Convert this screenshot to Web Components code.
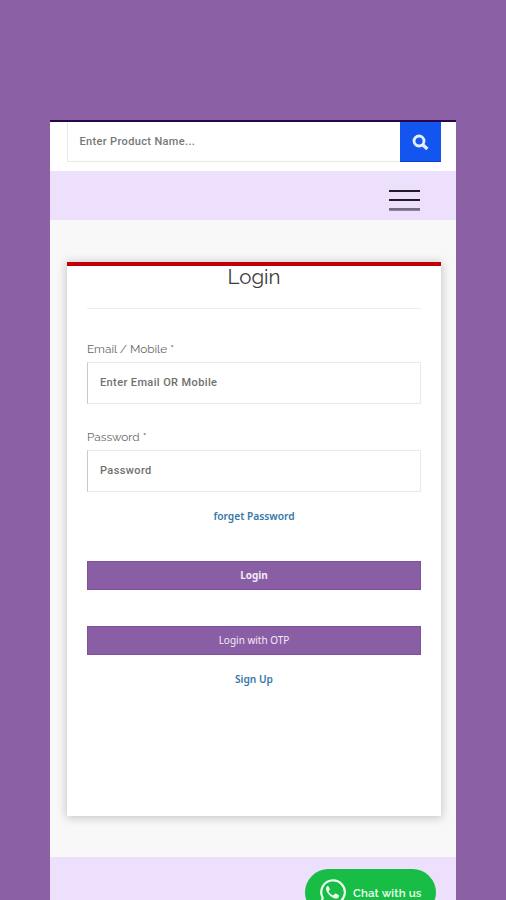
<!DOCTYPE html>
<html lang="en">
<head>
<meta charset="UTF-8">
<title>Login</title>
<style>
  body {
    margin: 0;
    background: #8b60a4;
    font-family: Roboto, "Liberation Sans", sans-serif;
  }
</style>
</head>
<body>
<phone-screen>
  <search-bar placeholder="Enter Product Name..."></search-bar>
  <menu-bar></menu-bar>
  <login-card heading="Login">
    <form-field label="Email / Mobile *" hint="Enter Email OR Mobile"></form-field>
    <form-field label="Password *" hint="Password"></form-field>
    <text-link class="forget">forget Password</text-link>
    <action-button class="strong">Login</action-button>
    <action-button class="otp">Login with OTP</action-button>
    <text-link class="signup">Sign Up</text-link>
  </login-card>
  <chat-footer>Chat with us</chat-footer>
</phone-screen>

<script>
class PhoneScreen extends HTMLElement {
  constructor() {
    super();
    this.attachShadow({ mode: "open" });
    this.shadowRoot.innerHTML = `
      <style>
        :host {
          display: block;
          box-sizing: border-box;
          height: 900px;
          padding: 120px 50px 0;
          overflow: hidden;
        }
        .screen {
          box-sizing: border-box;
          display: flex;
          flex-direction: column;
          height: 780px;
          border-top: 2px solid #25074a;
          background: #f8f8f8;
          overflow: hidden;
        }
      </style>
      <div class="screen"><slot></slot></div>
    `;
  }
}
customElements.define("phone-screen", PhoneScreen);

class SearchBar extends HTMLElement {
  constructor() {
    super();
    this.attachShadow({ mode: "open" });
    this.shadowRoot.innerHTML = `
      <style>
        :host {
          display: flex;
          flex: none;
          box-sizing: border-box;
          height: 49px;
          padding: 0 15px 9px 17px;
          background: #fff;
        }
        .box {
          flex: 1;
          box-sizing: border-box;
          padding-left: 11.5px;
          border: solid #e8e8e8;
          border-width: 0 0 1px 1px;
          font-size: 11px;
          font-weight: 500;
          letter-spacing: .35px;
          line-height: 40px;
          color: #777;
        }
        .go {
          display: flex;
          align-items: center;
          justify-content: center;
          width: 41px;
          background: #1355ee;
          box-shadow: inset 0 -1px #0a3fd0;
        }
      </style>
      <div class="box"></div>
      <div class="go">
        <svg width="17" height="17" viewBox="0 0 17 17" fill="none" stroke="#e6efff">
          <circle cx="7" cy="7" r="5" stroke-width="2.8"/>
          <path d="M11 11L15.4 15" stroke-width="3.4"/>
        </svg>
      </div>
    `;
    this.shadowRoot.querySelector(".box").textContent = this.getAttribute("placeholder");
  }
}
customElements.define("search-bar", SearchBar);

class MenuBar extends HTMLElement {
  constructor() {
    super();
    this.attachShadow({ mode: "open" });
    this.shadowRoot.innerHTML = `
      <style>
        :host {
          display: flex;
          flex: none;
          justify-content: flex-end;
          box-sizing: border-box;
          height: 49px;
          padding: 18px 36px 0 0;
          background: #ede0fd;
        }
        svg { display: block; }
      </style>
      <svg width="31" height="23" viewBox="0 0 31 23">
        <path d="M0 2H31M0 11H31" stroke="#231a2e" stroke-width="2.2"/>
        <path d="M0 20.4H31" stroke="#776d83" stroke-width="2.8"/>
      </svg>
    `;
  }
}
customElements.define("menu-bar", MenuBar);

class LoginCard extends HTMLElement {
  constructor() {
    super();
    this.attachShadow({ mode: "open" });
    this.shadowRoot.innerHTML = `
      <style>
        :host {
          display: flex;
          flex: none;
          flex-direction: column;
          box-sizing: border-box;
          height: 554px;
          margin: 42px 15px 41px 17px;
          padding: 0 20px;
          border-top: 4px solid #c00006;
          background: #fff;
          box-shadow: 0 1px 9px 1px rgba(0, 0, 0, .2);
        }
        h1 {
          box-sizing: border-box;
          height: 43px;
          margin: 0 0 32px;
          border-bottom: 1px solid #ececec;
          font: 400 20.5px/22px Raleway, Lato, sans-serif;
          text-align: center;
          color: #3c3c3c;
        }
        ::slotted(.forget) { margin-top: -9px; }
        ::slotted(.strong) { margin-top: 37px; font-weight: 700; }
        ::slotted(.otp) { margin-top: 36px; }
        ::slotted(.signup) { margin-top: 16px; }
      </style>
      <h1></h1>
      <slot></slot>
    `;
    this.shadowRoot.querySelector("h1").textContent = this.getAttribute("heading");
  }
}
customElements.define("login-card", LoginCard);

class FormField extends HTMLElement {
  constructor() {
    super();
    this.attachShadow({ mode: "open" });
    this.shadowRoot.innerHTML = `
      <style>
        :host { display: block; height: 88px; }
        .label {
          height: 21px;
          font: 400 11.8px/16px Raleway, Lato, sans-serif;
          color: #666;
        }
        .box {
          box-sizing: border-box;
          height: 42px;
          padding-left: 12px;
          border: 1px solid #e9e9e9;
          border-left-color: #c8c8c8;
          font-size: 11px;
          font-weight: 500;
          line-height: 40px;
          letter-spacing: .38px;
          color: #707070;
        }
      </style>
      <div class="label"></div>
      <div class="box"></div>
    `;
    this.shadowRoot.querySelector(".label").textContent = this.getAttribute("label");
    this.shadowRoot.querySelector(".box").textContent = this.getAttribute("hint");
  }
}
customElements.define("form-field", FormField);

class TextLink extends HTMLElement {
  constructor() {
    super();
    this.attachShadow({ mode: "open" });
    this.shadowRoot.innerHTML = `
      <style>
        :host {
          display: block;
          height: 16px;
          font: 600 10.2px/16px "Noto Sans", sans-serif;
          text-align: center;
          color: #3678a8;
        }
      </style>
      <slot></slot>
    `;
  }
}
customElements.define("text-link", TextLink);

class ActionButton extends HTMLElement {
  constructor() {
    super();
    this.attachShadow({ mode: "open" });
    this.shadowRoot.innerHTML = `
      <style>
        :host {
          display: block;
          height: 29px;
          background: #8a5ea4;
          box-shadow: inset 0 0 0 1px #80519d;
          font: 400 10px/28px "Noto Sans", sans-serif;
          text-align: center;
          color: #f3eaf8;
        }
      </style>
      <slot></slot>
    `;
  }
}
customElements.define("action-button", ActionButton);

class ChatFooter extends HTMLElement {
  constructor() {
    super();
    this.attachShadow({ mode: "open" });
    this.shadowRoot.innerHTML = `
      <style>
        :host {
          display: flex;
          flex: none;
          justify-content: flex-end;
          align-items: flex-start;
          box-sizing: border-box;
          height: 60px;
          padding: 12px 20px 0 0;
          background: #ede0fd;
        }
        .pill {
          display: flex;
          align-items: center;
          gap: 7px;
          box-sizing: border-box;
          width: 131px;
          height: 47px;
          padding-left: 14px;
          border-radius: 24px;
          background: #18bd45;
          font: 600 11.5px/16px Raleway, Lato, sans-serif;
          letter-spacing: .15px;
          white-space: nowrap;
          color: #effff2;
        }
        svg { flex: none; }
      </style>
      <div class="pill">
        <svg width="27" height="27" viewBox="0 0 27 27">
          <path d="M2 25L3.7 18.8A11.8 11.8 0 1 1 8.2 23.4Z" fill="none" stroke="#effff2" stroke-width="2.2" stroke-linejoin="round"/>
          <path d="M9.7 7.5C9.3 6.7 8.4 6.8 7.8 7.6C6.6 9 6.8 11 8.2 13.2C10.2 16.3 12.8 18.6 15.8 19.4C18 20 19.7 18.7 20 17.2C20.2 16.3 20 16.1 19.2 15.7L16.9 14.6C16.3 14.3 16 14.5 15.6 15L14.7 16.1C14.4 16.4 14.1 16.4 13.6 16.2C11.8 15.4 10.5 14 9.7 12.7C9.5 12.3 9.7 12 10 11.7L10.7 10.8C10.9 10.5 10.9 10.2 10.7 9.8Z" fill="#effff2"/>
        </svg>
        <slot></slot>
      </div>
    `;
  }
}
customElements.define("chat-footer", ChatFooter);
</script>
</body>
</html>
